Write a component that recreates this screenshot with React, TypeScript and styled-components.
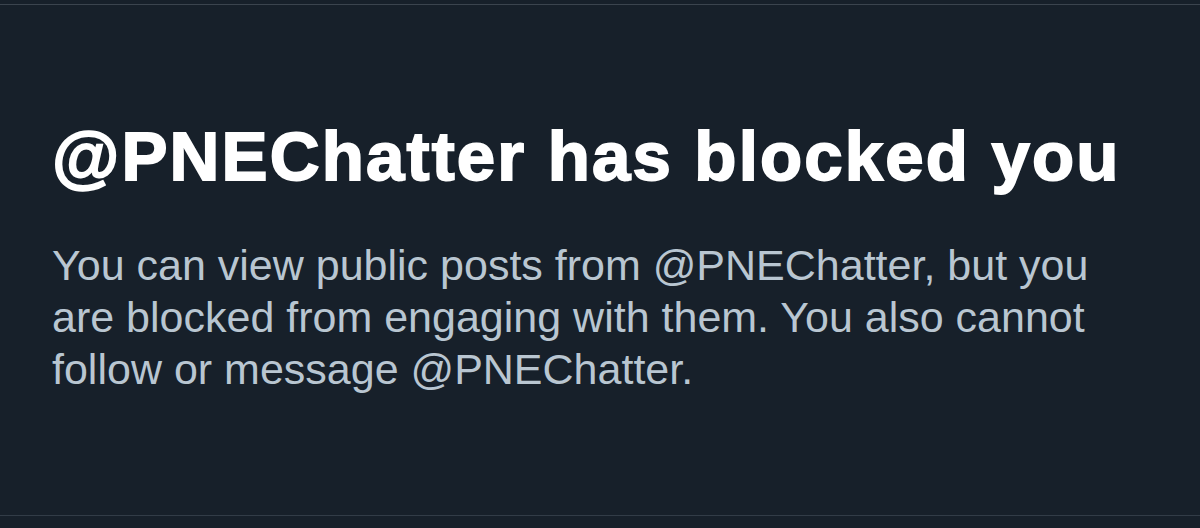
import React from "react";
import styled, { createGlobalStyle } from "styled-components";

const GlobalStyle = createGlobalStyle`
  html, body {
    margin: 0;
    padding: 0;
    background: #17202a;
  }
  * { box-sizing: border-box; }
`;

const Page = styled.div`
  width: 1200px;
  height: 528px;
  background: #17202a;
  display: flex;
  flex-direction: column;
  padding-top: 4px;
  overflow: hidden;
`;

const Divider = styled.div<{ $tone: string }>`
  height: 1px;
  flex: none;
  background: ${(p) => p.$tone};
`;

const Content = styled.main`
  flex: 1;
  display: flex;
  flex-direction: column;
  padding: 112px 0 0 52px;
  font-family: "Liberation Sans", Arial, sans-serif;
`;

const Title = styled.h1`
  margin: 0;
  font-size: 69px;
  line-height: 80px;
  font-weight: 700;
  letter-spacing: 2.15px;
  -webkit-text-stroke: 1.8px #ffffff;
  color: #ffffff;
  white-space: nowrap;
`;

const Message = styled.p`
  margin: 42px 0 0 0;
  max-width: 1080px;
  font-size: 43px;
  line-height: 52px;
  font-weight: 400;
  color: #b9c6d1;
`;

const BottomGap = styled.div`
  height: 12px;
  flex: none;
`;

export default function App() {
  return (
    <>
      <GlobalStyle />
      <Page>
        <Divider $tone="#3b444e" />
        <Content>
          <Title>@PNEChatter has blocked you</Title>
          <Message>
            You can view public posts from @PNEChatter, but you are blocked from
            engaging with them. You also cannot follow or message @PNEChatter.
          </Message>
        </Content>
        <Divider $tone="#323c47" />
        <BottomGap />
      </Page>
    </>
  );
}
